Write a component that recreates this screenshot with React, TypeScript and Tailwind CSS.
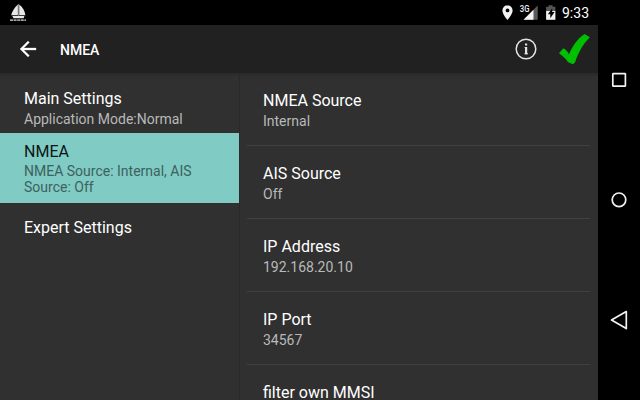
import React from "react";

const settings = [
  { title: "NMEA Source", value: "Internal" },
  { title: "AIS Source", value: "Off" },
  { title: "IP Address", value: "192.168.20.10" },
  { title: "IP Port", value: "34567" },
  { title: "filter own MMSI", value: "" },
];

function StatusBar() {
  return (
    <div className="flex h-[25px] shrink-0 items-center justify-between bg-black pr-2 pl-[9px]">
      <svg width="18" height="25" viewBox="0 0 18 25" fill="#e8e8e8">
        <path d="M8.9 4.6v10.6H2.2C3 11.6 5.3 8 8.9 4.6Z" />
        <path d="M10.2 4.4c3.2 2.2 5.6 6.2 6.2 10.8h-6.2Z" />
        <path d="M9.1 4h1v12.4h-1Z" fill="#888" />
        <path d="M3.4 16h12l-.8 2.2H4.4Z" />
        <path d="M1 20.2h16" stroke="#dcdcdc" strokeWidth="1.3" strokeDasharray="3 .6" />
      </svg>
      <div className="flex items-center">
        <svg width="64" height="25" viewBox="498 0 64 25">
          <path
            d="M507.5 5.3a5.1 5.1 0 0 0-5.1 5.1c0 3.8 5.1 9.5 5.1 9.5s5.1-5.7 5.1-9.5a5.1 5.1 0 0 0-5.1-5.1Zm0 7a1.9 1.9 0 1 1 0-3.8 1.9 1.9 0 0 1 0 3.8Z"
            fill="#f2f2f2"
          />
          <path d="M537.7 5.5v14.2h-14.2Z" fill="#5b5b5b" />
          <path d="M533.5 9.7v10h-10Z" fill="#f4f4f4" />
          <text x="519.8" y="12" fontSize="8.5" fontWeight="500" textLength="9.6" lengthAdjust="spacingAndGlyphs" fill="#f2f2f2" stroke="#000" strokeWidth="1.5" paintOrder="stroke" fontFamily="Roboto, sans-serif">
            3G
          </text>
          <path d="M548.6 5.2h4v1.6h2.8V11h-9.3V6.8h2.5Z" fill="#555" />
          <path d="M546.1 11h9.3v8.8h-9.3Z" fill="#f2f2f2" />
          <path d="m552.2 8.2-4.3 6.1h2.4v3.9l4.3-6.1h-2.4Z" fill="#000" />
        </svg>
        <span className="w-7 pt-0.5 text-[14px] leading-[23px] whitespace-nowrap text-white">9:33</span>
      </div>
    </div>
  );
}

function ActionBar() {
  return (
    <header className="flex h-12 shrink-0 items-center bg-[#212121] pl-4">
      <svg width="24" height="24" viewBox="0 0 24 24" fill="#fff" stroke="#fff" strokeWidth=".3">
        <path d="M20 11H7.8l5.6-5.6L12 4l-8 8 8 8 1.4-1.4L7.8 13H20v-2Z" />
      </svg>
      <h1 className="ml-5 flex-1 pt-px text-[14px] leading-5 font-medium text-white">NMEA</h1>
      <svg width="84" height="48" viewBox="514 25 84 48">
        <circle cx="526" cy="49" r="9.8" fill="none" stroke="#e2e2e2" strokeWidth="1.5" />
        <path d="M524.6 47.5h1.5M524.4 53.8h3.6" stroke="#e2e2e2" strokeWidth="1.1" fill="none" />
        <path d="M525 47h2.2v7.3H525ZM525 43.6h2.2v2H525Z" fill="#e2e2e2" />
        <path
          d="M559 53.3 563.3 48.2C565.8 49.4 567.4 51.3 569 54.2 572.3 46.6 577.3 38.7 584.5 34L589.9 37.3C583.5 43.4 578.8 51.4 575 62.4L572.8 64.2 567.9 62C565.2 58.2 562.7 55.9 559 53.3Z"
          fill="#00bf00"
        />
      </svg>
    </header>
  );
}

function Sidebar() {
  return (
    <nav className="w-[239px] shrink-0">
      <div className="h-[60px] pt-[15px] pl-6">
        <div className="text-[16px] leading-[21px] text-white">Main Settings</div>
        <div className="mt-px text-[14px] leading-[19px] text-[#b9b9b9]">Application Mode:Normal</div>
      </div>
      <div className="h-[70px] bg-[#80cbc4] pt-2 pl-6">
        <div className="text-[16px] leading-[21px] text-[#0d1413]">NMEA</div>
        <div className="mt-px w-[180px] text-[14px] leading-4 text-[#3c625e]">NMEA Source: Internal, AIS Source: Off</div>
      </div>
      <div className="pt-[14px] pl-6 text-[16px] leading-[21px] text-white">Expert Settings</div>
    </nav>
  );
}

function Preferences() {
  return (
    <main className="flex-1 border-l border-[#292929] pr-2 pl-[7px]">
      {settings.map((item) => (
        <div key={item.title} className="h-[73px] border-b border-[#414141] pt-[17px] pl-4">
          <div className="text-[16px] leading-[21px] text-white">{item.title}</div>
          <div className="mt-px text-[14px] leading-[19px] text-[#b9b9b9]">{item.value}</div>
        </div>
      ))}
    </main>
  );
}

function NavigationBar() {
  return (
    <aside className="h-full w-[42px] shrink-0 bg-black">
      <svg width="42" height="400" viewBox="598 0 42 400" fill="none" stroke="#f2f2f2" strokeWidth="1.7">
        <rect x="612.8" y="73.6" width="12.6" height="12.6" rx=".5" />
        <circle cx="619" cy="199.8" r="6.8" />
        <path d="M611.5 320.1 626.3 311.6v17Z" strokeLinejoin="round" />
      </svg>
    </aside>
  );
}

export default function App() {
  return (
    <div className="flex h-[400px] w-[640px] overflow-hidden bg-[#303030] font-['Roboto',sans-serif]">
      <div className="flex h-full w-[598px] shrink-0 flex-col overflow-hidden">
        <StatusBar />
        <ActionBar />
        <div className="flex min-h-0 flex-1 bg-linear-to-b from-[#292929] to-[#303030] to-[4px]">
          <Sidebar />
          <Preferences />
        </div>
      </div>
      <NavigationBar />
    </div>
  );
}
